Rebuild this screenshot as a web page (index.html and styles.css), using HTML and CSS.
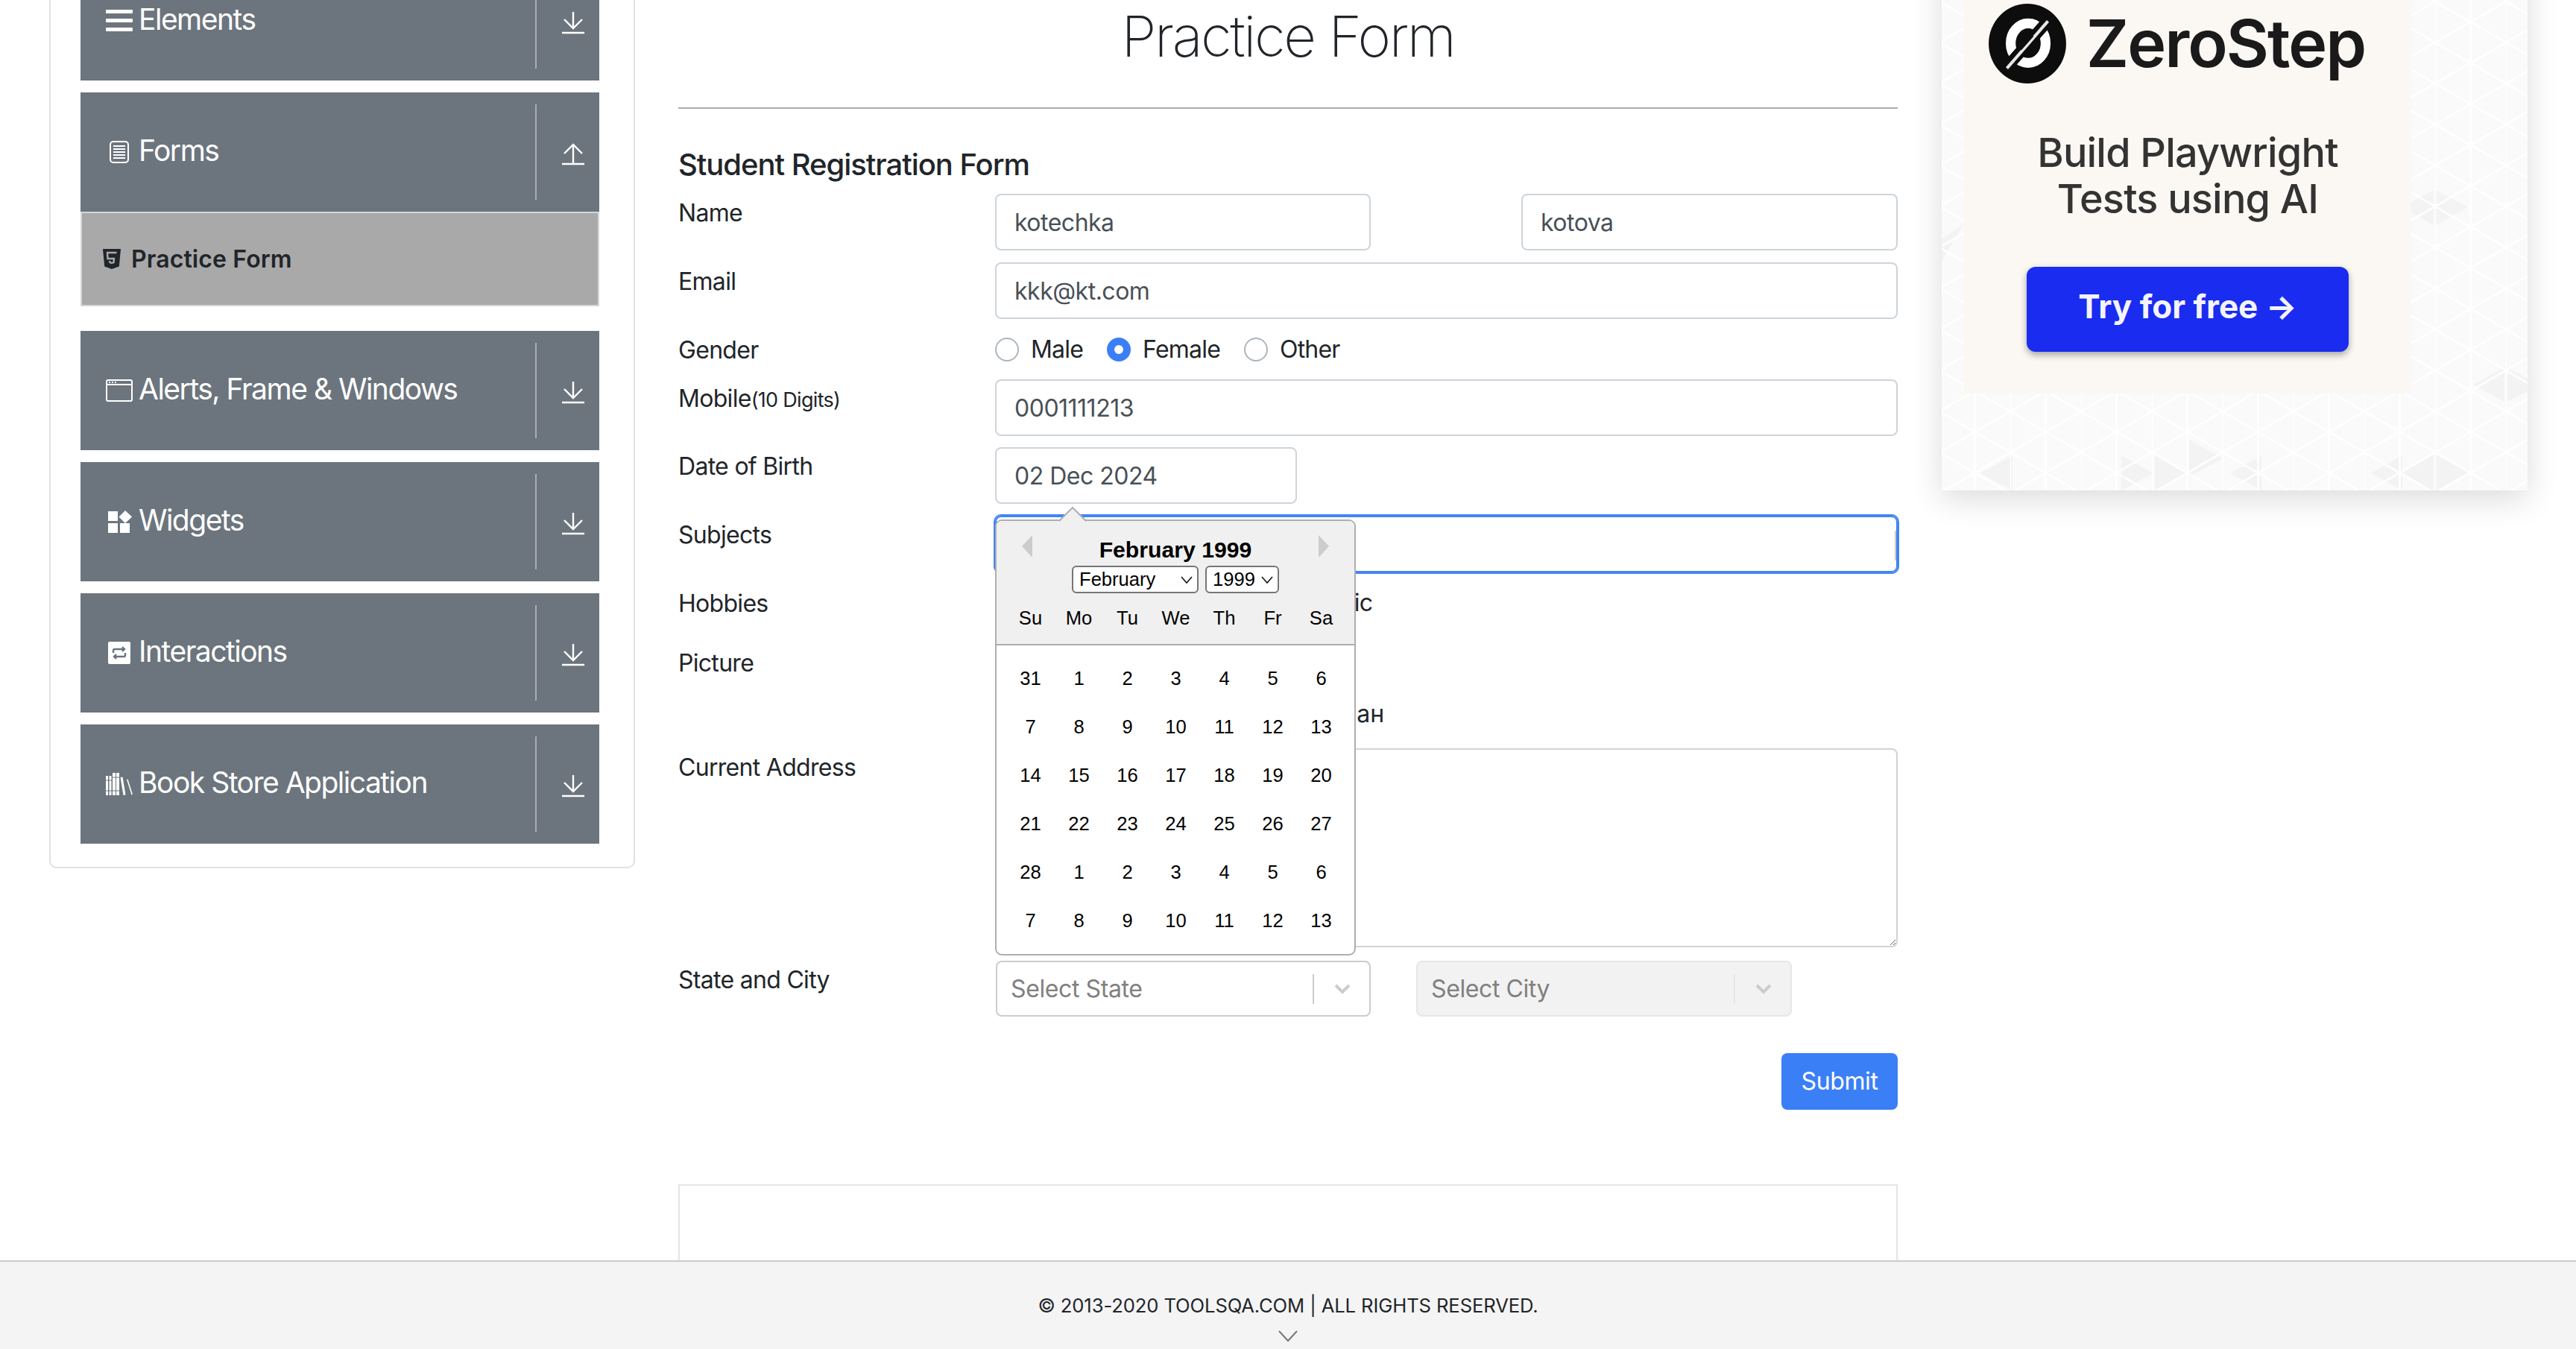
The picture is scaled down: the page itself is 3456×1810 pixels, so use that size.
FILE: index.html
```html
<!doctype html>
<html lang="en">
<head>
    <meta charset="UTF-8">
    <title>Practice Form</title>
    <link rel="stylesheet" href="styles.css">
</head>
<body>
<div class="page">
    <aside class="sidebar">
        <div class="group">
            <svg class="group-icon" viewBox="0 0 36 30"><path d="M1 0h34a1 1 0 0 1 1 1v3a1 1 0 0 1-1 1H1a1 1 0 0 1-1-1V1a1 1 0 0 1 1-1zm0 12h34a1 1 0 0 1 1 1v3a1 1 0 0 1-1 1H1a1 1 0 0 1-1-1v-3a1 1 0 0 1 1-1zm0 12h34a1 1 0 0 1 1 1v3a1 1 0 0 1-1 1H1a1 1 0 0 1-1-1v-3a1 1 0 0 1 1-1z" fill="#fff"/></svg>
            <span class="group-name">Elements</span>
            <span class="group-toggle"><svg viewBox="0 0 30 30"><path d="M15 0v22M3 10l12 12 12-12M0 28h30" fill="none" stroke="#fff" stroke-width="2.4"/></svg></span>
        </div>
        <div class="group-open">
            <div class="group">
                <svg class="group-icon" viewBox="0 0 36 30"><rect x="6" y="1" width="24" height="28" rx="4" fill="none" stroke="#fff" stroke-width="2"/><path d="M10 7h16M10 11h16M10 15h16M10 19h16M10 23h16" stroke="#fff" stroke-width="1.8"/></svg>
                <span class="group-name">Forms</span>
                <span class="group-toggle"><svg viewBox="0 0 30 30"><path d="M15 28V4M3 14L15 2l12 12M0 28h30" fill="none" stroke="#fff" stroke-width="2.4"/></svg></span>
            </div>
            <div class="sub-item">
                <svg class="sub-icon" viewBox="0 0 24 27"><path d="M0 0h24l-2.2 23.5L12 27l-9.8-3.500z" fill="#212529"/><path d="M18.500 5H6l.5 8h8.500l-.4 5-2.600 1-2.600-1-.2-2" fill="none" stroke="#a9a9a9" stroke-width="2.4"/></svg>
                <span>Practice Form</span>
            </div>
        </div>
        <div class="group">
            <svg class="group-icon" viewBox="0 0 36 30"><rect x="1" y="1" width="34" height="28" rx="2" fill="none" stroke="#fff" stroke-width="2"/><path d="M1 7h34" stroke="#fff" stroke-width="2"/><path d="M4 4h2M8 4h2M12 4h2" stroke="#fff" stroke-width="2"/></svg>
            <span class="group-name">Alerts, Frame &amp; Windows</span>
            <span class="group-toggle"><svg viewBox="0 0 30 30"><path d="M15 0v22M3 10l12 12 12-12M0 28h30" fill="none" stroke="#fff" stroke-width="2.4"/></svg></span>
        </div>
        <div class="group">
            <svg class="group-icon" viewBox="0 0 36 30"><path d="M3 1h13v13H3zM3 17h13v13H3zM19 17h13v13H19zM26 0l9 8.500-9 8.500-8.500-8.500z" fill="#fff"/></svg>
            <span class="group-name">Widgets</span>
            <span class="group-toggle"><svg viewBox="0 0 30 30"><path d="M15 0v22M3 10l12 12 12-12M0 28h30" fill="none" stroke="#fff" stroke-width="2.4"/></svg></span>
        </div>
        <div class="group">
            <svg class="group-icon" viewBox="0 0 36 30"><rect x="3" y="0" width="30" height="30" rx="2" fill="#fff"/><path d="M10 15v-3a2 2 0 0 1 2-2h12M22 7l3 3-3 3M26 15v3a2 2 0 0 1-2 2H12M14 17l-3 3 3 3" fill="none" stroke="#6c757d" stroke-width="2.4"/></svg>
            <span class="group-name">Interactions</span>
            <span class="group-toggle"><svg viewBox="0 0 30 30"><path d="M15 0v22M3 10l12 12 12-12M0 28h30" fill="none" stroke="#fff" stroke-width="2.4"/></svg></span>
        </div>
        <div class="group">
            <svg class="group-icon" viewBox="0 0 36 30"><path d="M0 4h3v26H0zM4.500 4h3v26h-3zM9 0h4v30H9zM14 0h4v30h-4zM19.500 6l3-.5 4 24-3 .5zM28 9l1.500-.5L36 29l-1.500.5z" fill="#fff"/><path d="M0 10h8M0 24h8M9 6h9M9 24h9" stroke="#6c757d"/></svg>
            <span class="group-name">Book Store Application</span>
            <span class="group-toggle"><svg viewBox="0 0 30 30"><path d="M15 0v22M3 10l12 12 12-12M0 28h30" fill="none" stroke="#fff" stroke-width="2.4"/></svg></span>
        </div>
    </aside>

    <main class="content">
        <h1 class="title">Practice Form</h1>
        <hr class="rule">
        <h2 class="form-title">Student Registration Form</h2>
        <form class="form">
            <div class="row">
                <label class="row-label">Name</label>
                <div class="name-fields">
                    <input class="field" type="text" value="kotechka">
                    <input class="field" type="text" value="kotova">
                </div>
            </div>
            <div class="row">
                <label class="row-label">Email</label>
                <input class="field" type="text" value="kkk@kt.com">
            </div>
            <div class="row row-gender">
                <label class="row-label">Gender</label>
                <div class="options">
                    <span class="option"><span class="radio"></span>Male</span>
                    <span class="option"><span class="radio radio-on"></span>Female</span>
                    <span class="option"><span class="radio"></span>Other</span>
                </div>
            </div>
            <div class="row row-mobile">
                <label class="row-label">Mobile<small class="hint">(10 Digits)</small></label>
                <input class="field" type="text" value="0001111213">
            </div>
            <div class="row">
                <label class="row-label">Date of Birth</label>
                <div class="date-wrap">
                    <input class="field field-date" type="text" value="02 Dec 2024">
                    <div class="datepicker">
                        <svg class="dp-tip" viewBox="0 0 36 20"><path d="M0 19L18 1l18 18" fill="#f0f0f0" stroke="#aeaeae" stroke-width="2"/></svg>
                        <span class="dp-nav dp-prev"></span>
                        <span class="dp-nav dp-next"></span>
                        <div class="dp-head">
                            <div class="dp-month">February 1999</div>
                            <div class="dp-selects">
                                <span class="dp-select dp-select-month">February<svg class="dp-caret" viewBox="0 0 16 10"><path d="M1 1l7 8 7-8" fill="none" stroke="#222" stroke-width="1.800"/></svg></span>
                                <span class="dp-select dp-select-year">1999<svg class="dp-caret" viewBox="0 0 16 10"><path d="M1 1l7 8 7-8" fill="none" stroke="#222" stroke-width="1.800"/></svg></span>
                            </div>
                            <div class="dp-grid dp-names">
                                <span>Su</span><span>Mo</span><span>Tu</span><span>We</span><span>Th</span><span>Fr</span><span>Sa</span>
                            </div>
                        </div>
                        <div class="dp-grid dp-days">
                            <span>31</span><span>1</span><span>2</span><span>3</span><span>4</span><span>5</span><span>6</span>
                            <span>7</span><span>8</span><span>9</span><span>10</span><span>11</span><span>12</span><span>13</span>
                            <span>14</span><span>15</span><span>16</span><span>17</span><span>18</span><span>19</span><span>20</span>
                            <span>21</span><span>22</span><span>23</span><span>24</span><span>25</span><span>26</span><span>27</span>
                            <span>28</span><span>1</span><span>2</span><span>3</span><span>4</span><span>5</span><span>6</span>
                            <span>7</span><span>8</span><span>9</span><span>10</span><span>11</span><span>12</span><span>13</span>
                        </div>
                    </div>
                </div>
            </div>
            <div class="row">
                <label class="row-label">Subjects</label>
                <div class="subjects"><span class="subjects-bar"></span></div>
            </div>
            <div class="row row-hobbies">
                <label class="row-label">Hobbies</label>
                <div class="options">
                    <span class="option"><span class="check"></span>Sports</span>
                    <span class="option"><span class="check"></span>Reading</span>
                    <span class="option"><span class="check"></span>Music</span>
                </div>
            </div>
            <div class="row row-picture">
                <label class="row-label">Picture</label>
                <div class="picture">
                    <div>Select picture</div>
                    <div class="file-line"><span class="file-button">Choose File</span>Иван</div>
                </div>
            </div>
            <div class="row row-address">
                <label class="row-label">Current Address</label>
                <textarea class="field field-area"></textarea>
            </div>
            <div class="row">
                <label class="row-label">State and City</label>
                <div class="selects">
                    <div class="picker">
                        <span class="picker-text">Select State</span>
                        <span class="picker-sep"></span>
                        <svg class="picker-arrow" viewBox="0 0 24 16"><path d="M3 3l9 9 9-9" fill="none" stroke="#ccc" stroke-width="4"/></svg>
                    </div>
                    <div class="picker picker-off">
                        <span class="picker-text">Select City</span>
                        <span class="picker-sep"></span>
                        <svg class="picker-arrow" viewBox="0 0 24 16"><path d="M3 3l9 9 9-9" fill="none" stroke="#ccc" stroke-width="4"/></svg>
                    </div>
                </div>
            </div>
            <div class="submit-row"><button class="submit" type="button">Submit</button></div>
        </form>
        <div class="frame"></div>
    </main>

    <aside class="ad">
        <svg class="ad-pattern" width="786" height="758">
            <defs>
                <pattern id="tri" width="95" height="55" patternUnits="userSpaceOnUse" patternTransform="translate(-3 -8)">
                    <path d="M0 0v55M47.500 0v55M0 0l47.500 27.500L95 0M0 55l47.500-27.500L95 55" fill="none" stroke="#fff" stroke-width="2.500"/>
                </pattern>
            </defs>
            <rect width="786" height="758" fill="#fafafa"/>
            <g fill="#f3f3f3">
                <path d="M660 355l-43 23 43 24zM663 355l43 23-43 24zM755 593l-42 23 42 23zM759 593l27 15v17l-27 14zM660 710l-43 24 43 24zM663 710l43 24-43 24z"/>
                <path d="M95 711l-43 24 43 23zM241 711v47l43-23zM286 711l45 24-45 23zM332 690l45 25-45 25zM429 711l-42 24 42 23zM618 711l-42 24 42 23zM30 400L0 420v30z"/>
            </g>
            <rect width="786" height="758" fill="url(#tri)"/>
        </svg>
        <div class="ad-card">
            <div class="ad-logo">
                <svg class="ad-mark" viewBox="0 0 102 105">
                    <ellipse cx="51" cy="52.500" rx="51" ry="52.500" fill="#0d0d0d"/>
                    <ellipse cx="52" cy="52" rx="23" ry="26" fill="none" stroke="#fff" stroke-width="13"/>
                    <path d="M20 88L82 18" stroke="#0d0d0d" stroke-width="15"/>
                    <path d="M24 85L78 23" stroke="#e8e8e8" stroke-width="4"/>
                    <path d="M42 60l16-18" stroke="#0d0d0d" stroke-width="3"/>
                </svg>
                <span class="ad-brand">ZeroStep</span>
            </div>
            <div class="ad-text">Build Playwright<br>Tests using AI</div>
            <div class="ad-button">Try for free →</div>
        </div>
    </aside>
</div>

<footer class="footer">
    <div class="footer-text">© 2013-2020 TOOLSQA.COM | ALL RIGHTS RESERVED.</div>
    <svg class="footer-arrow" viewBox="0 0 26 16"><path d="M1 1l12 13L25 1" fill="none" stroke="#777" stroke-width="2"/></svg>
</footer>
</body>
</html>
```

FILE: styles.css
```css
*{
    box-sizing: border-box;
}
body{
    margin: 0;
    height: 1810px;
    overflow: hidden;
    background-color: #fff;
    color: #212529;
    font-family: Inter, "Noto Sans", sans-serif;
    font-size: 32px;
    line-height: 48px;
}
.page{
    display: flex;
    align-items: flex-start;
    margin-top: -100px;
    padding-left: 66px;
}

/* sidebar */
.sidebar{
    width: 786px;
    flex: none;
    display: flex;
    flex-direction: column;
    gap: 16px;
    padding: 46px 46px 31px 40px;
    border: 2px solid #dee2e6;
    border-radius: 10px;
    margin-right: 58px;
}
.group{
    height: 160px;
    display: flex;
    align-items: center;
    padding-left: 34px;
    background-color: #6c757d;
    color: #fff;
}
.group-icon{
    width: 36px;
    height: 30px;
    flex: none;
    margin-right: 8px;
}
.group-name{
    flex: 1;
    font-size: 39px;
    line-height: 48px;
    letter-spacing: -1.5px;
    margin-top: -4px;
}
.group-toggle{
    width: 86px;
    height: 128px;
    flex: none;
    display: flex;
    align-items: center;
    justify-content: center;
    padding-left: 14px;
    border-left: 2px solid #a8adb2;
}
.group-toggle svg{
    width: 30px;
    height: 30px;
    margin-top: 6px;
}
.group-open{
    display: flex;
    flex-direction: column;
    margin-bottom: 17px;
}
.sub-item{
    height: 127px;
    display: flex;
    align-items: center;
    padding-left: 28px;
    background-color: #a9a9a9;
    border: 2px solid #d3d6da;
    font-weight: 600;
    letter-spacing: 0.1px;
}
.sub-icon{
    width: 24px;
    height: 27px;
    margin-right: 14px;
}

/* form */
.content{
    width: 1636px;
    flex: none;
    margin-right: 59px;
}
.title{
    margin: 100px 0 0;
    font-size: 76px;
    line-height: 96px;
    font-weight: 200;
    text-align: center;
    letter-spacing: -2.4px;
}
.rule{
    height: 2px;
    margin: 48px 0 0;
    border: 0;
    background-color: #aaa;
}
.form-title{
    margin: 51px 0 15px;
    font-size: 40px;
    line-height: 48px;
    font-weight: 500;
    letter-spacing: -1.05px;
}
.row{
    display: grid;
    grid-template-columns: 425px 1fr;
    margin-bottom: 16px;
}
.row-gender{
    height: 49px;
}
.row-mobile{
    margin-bottom: 15px;
}
.row-hobbies{
    height: 64px;
}
.row-picture{
    height: 124px;
}
.row-address{
    margin-bottom: 18px;
}
.row-label{
    padding-top: 2px;
    letter-spacing: -0.7px;
}
.hint{
    font-size: 27px;
}
.name-fields{
    display: grid;
    grid-template-columns: 504px 505px;
    justify-content: space-between;
}
.field{
    display: block;
    width: 100%;
    height: 76px;
    padding: 0 24px;
    border: 2px solid #ced4da;
    border-radius: 8px;
    color: #495057;
    font: inherit;
    letter-spacing: -0.5px;
    outline: none;
}
.field-date{
    width: 405px;
}
.field-area{
    height: 267px;
}
.options{
    display: flex;
    gap: 32px;
    padding-top: 1px;
}
.option{
    display: flex;
    align-items: center;
    height: 48px;
    letter-spacing: -0.8px;
}
.radio,
.check{
    width: 32px;
    height: 32px;
    margin-right: 16px;
    border: 2px solid #adb5bd;
    background-color: #fff;
}
.radio{
    border-radius: 50%;
}
.radio-on{
    border: 10px solid #3b7ff7;
}
.check{
    border-radius: 8px;
}
.date-wrap{
    position: relative;
}
.subjects{
    position: relative;
    height: 76px;
    border: 2px solid #4285f4;
    border-radius: 8px;
    box-shadow: 0 0 0 2px #4285f4;
}
.subjects-bar{
    position: absolute;
    right: 0;
    top: 18px;
    width: 2px;
    height: 40px;
    background-color: #ccc;
}
.picture{
    font-size: 32px;
}
.file-line{
    display: flex;
    margin-top: 22px;
}
.file-button{
    width: 443px;
}
.selects{
    display: flex;
    gap: 61px;
    padding-left: 1px;
}
.picker{
    width: 503px;
    height: 75px;
    display: flex;
    align-items: center;
    padding-left: 18px;
    border: 2px solid #ccc;
    border-radius: 8px;
    background-color: #fff;
    color: #808080;
    letter-spacing: -0.4px;
}
.picker-text{
    flex: 1;
}
.picker-sep{
    width: 2px;
    height: 40px;
    background-color: #ccc;
}
.picker-arrow{
    width: 24px;
    height: 16px;
    margin: 0 24px 0 26px;
}
.picker-off{
    width: 504px;
    border-color: #e6e6e6;
    background-color: #f2f2f2;
}
.picker-off .picker-sep{
    background-color: #e6e6e6;
}
.submit-row{
    display: flex;
    justify-content: flex-end;
    margin-top: 49px;
}
.submit{
    width: 156px;
    height: 76px;
    padding: 0;
    border: 0;
    border-radius: 8px;
    background-color: #3b7ff7;
    color: #fff;
    font: inherit;
    letter-spacing: -0.4px;
}
.frame{
    height: 400px;
    margin-top: 100px;
    border: 2px solid #e5e5e5;
}

/* calendar popup */
.datepicker{
    position: absolute;
    left: 0;
    top: 97px;
    width: 484px;
    height: 585px;
    border: 2px solid #aeaeae;
    border-radius: 9px;
    background-color: #fff;
    color: #000;
    font-family: "Liberation Sans", Arial, sans-serif;
    font-size: 25.6px;
    z-index: 2;
}
.dp-tip{
    position: absolute;
    left: 84px;
    top: -19px;
    width: 36px;
    height: 20px;
}
.dp-nav{
    position: absolute;
    top: 19px;
    width: 0;
    height: 0;
    border-top: 15px solid transparent;
    border-bottom: 15px solid transparent;
}
.dp-prev{
    left: 34px;
    border-right: 14px solid #ccc;
}
.dp-next{
    right: 34px;
    border-left: 14px solid #ccc;
}
.dp-head{
    height: 167px;
    padding-top: 21px;
    border-bottom: 2px solid #aeaeae;
    border-radius: 7px 7px 0 0;
    background-color: #f0f0f0;
}
.dp-month{
    font-size: 30.2px;
    line-height: 36px;
    font-weight: 700;
    text-align: center;
}
.dp-selects{
    display: flex;
    justify-content: center;
    gap: 9px;
    margin-top: 3px;
}
.dp-select{
    height: 37px;
    display: flex;
    align-items: center;
    justify-content: space-between;
    padding: 0 6px 0 8px;
    border: 2px solid #767676;
    border-radius: 6px;
    background-color: #fff;
    font-size: 25.6px;
    line-height: 33px;
}
.dp-select-month{
    width: 170px;
}
.dp-select-year{
    width: 99px;
}
.dp-caret{
    width: 16px;
    height: 10px;
}
.dp-grid{
    display: grid;
    grid-template-columns: repeat(7, 65px);
    margin: 0 0 0 13px;
    text-align: center;
}
.dp-names{
    margin-top: 6px;
    line-height: 54px;
}
.dp-days{
    margin-top: 12px;
    line-height: 65px;
}

/* advert */
.ad{
    position: relative;
    width: 786px;
    height: 758px;
    flex: none;
    box-shadow: 0 12px 40px rgba(0, 0, 0, .14);
}
.ad-pattern{
    position: absolute;
    left: 0;
    top: 0;
}
.ad-card{
    position: relative;
    width: 600px;
    height: 628px;
    margin-left: 30px;
    padding-top: 105px;
    display: flex;
    flex-direction: column;
    align-items: center;
    background-color: #fbf8f3;
}
.ad-logo{
    display: flex;
    align-items: center;
    gap: 26px;
    padding-right: 30px;
}
.ad-mark{
    width: 106px;
    height: 107px;
}
.ad-brand{
    font-size: 88px;
    line-height: 105px;
    font-weight: 600;
    color: #1a1a1a;
    letter-spacing: -2px;
}
.ad-text{
    margin-top: 62px;
    font-size: 54px;
    line-height: 62px;
    font-weight: 500;
    color: #333;
    text-align: center;
    letter-spacing: -0.8px;
}
.ad-button{
    width: 432px;
    height: 114px;
    margin-top: 60px;
    border-radius: 12px;
    background-color: #1a2cf0;
    color: #f4f4ff;
    box-shadow: 0 4px 10px rgba(0, 0, 0, .35);
    font-size: 44px;
    line-height: 106px;
    font-weight: 700;
    text-align: center;
}

/* footer */
.footer{
    position: fixed;
    left: 0;
    right: 0;
    bottom: 0;
    height: 119px;
    padding-top: 41px;
    border-top: 2px solid #ccc;
    background-color: #f4f4f4;
    text-align: center;
}
.footer-text{
    font-size: 25.6px;
    line-height: 36px;
    letter-spacing: -0.1px;
}
.footer-arrow{
    display: block;
    width: 26px;
    height: 16px;
    margin: 15px auto 0;
}
```
